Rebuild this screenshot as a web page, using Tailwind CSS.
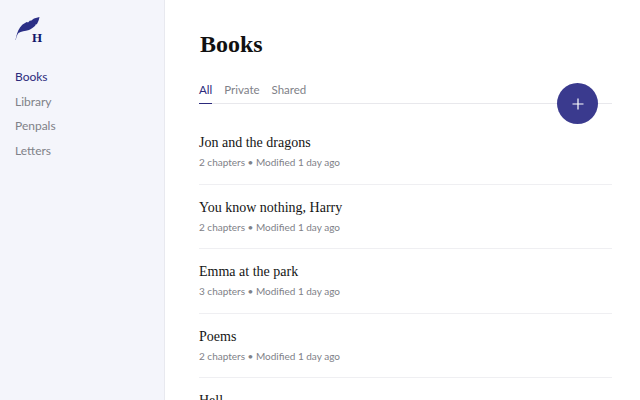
<!DOCTYPE html>
<html lang="en">
<head>
  <meta charset="UTF-8">
  <title>Books</title>
  <script src="https://cdn.jsdelivr.net/npm/@tailwindcss/browser@4"></script>
</head>
<body class="w-[640px] h-[400px] overflow-hidden bg-white flex font-['Lato',sans-serif]">
  <!-- sidebar -->
  <aside class="w-[165px] h-[400px] shrink-0 bg-[#f4f5fb] border-r border-[#e8e9ef] pl-[15px] pt-[17px]">
    <div class="relative w-[30px] h-[28px]">
      <svg width="26" height="24" viewBox="0 0 26 24" class="block">
        <path d="M0.5 23 C1.5 18 2.5 14 5 10.5 C8 6.5 10 6 12 5 L13 5.5 L15 3.5 L16 3.8 L19 1.5 L24.5 0 C24 3 23 5 22 7 L20 8 L20.5 8.5 C18 11 16 12 14 13 C10 14.5 6 14 3.5 16 C2 18 1.3 20 0.8 23 Z" fill="#2b2f86"/>
      </svg>
      <span class="absolute left-[17px] top-[14px] font-['Liberation_Serif',serif] font-bold text-[13px] leading-[14px] text-[#11176b]">H</span>
    </div>
    <nav class="mt-[23px] flex flex-col gap-[6.7px] text-[12px] leading-[18px] text-[#808188]">
      <a class="text-[#2c2a7c]">Books</a>
      <a>Library</a>
      <a>Penpals</a>
      <a>Letters</a>
    </nav>
  </aside>

  <!-- main -->
  <main class="relative flex-1 pl-[35px] pr-[28px] pt-[28px]">
    <h1 class="font-['Liberation_Serif',serif] font-bold text-[24px] leading-[32px] text-[#111]">Books</h1>
    <div class="mt-[21px] -ml-px flex gap-[12px] border-b border-[#e8e8ec] text-[11.5px] leading-[18px] text-[#808188]">
      <a class="text-[#2c2a7c] border-b border-[#2c2a7c] -mb-px pb-[4px]">All</a>
      <a class="pb-[4px]">Private</a>
      <a class="pb-[4px]">Shared</a>
    </div>
    <button class="absolute left-[392px] top-[83px] w-[41px] h-[41px] rounded-full bg-[#3a3a8e] flex items-center justify-center">
      <svg width="12" height="12" viewBox="0 0 12 12"><path d="M6 0.5V11.5M0.5 6H11.5" stroke="#fff" stroke-width="1.2"/></svg>
    </button>

    <ul class="-ml-px">
      <li class="h-[81px] pt-[29px] border-b border-[#efeff2]">
        <p class="font-['Liberation_Serif',serif] text-[14px] leading-[20px] text-[#151515]">Jon and the dragons</p>
        <p class="mt-[2px] text-[10px] leading-[14px] text-[#808188]">2 chapters • Modified 1 day ago</p>
      </li>
      <li class="h-[64px] pt-[13px] border-b border-[#efeff2]">
        <p class="font-['Liberation_Serif',serif] text-[14px] leading-[20px] text-[#151515]">You know nothing, Harry</p>
        <p class="mt-[2px] text-[10px] leading-[14px] text-[#808188]">2 chapters • Modified 1 day ago</p>
      </li>
      <li class="h-[65px] pt-[13px] border-b border-[#efeff2]">
        <p class="font-['Liberation_Serif',serif] text-[14px] leading-[20px] text-[#151515]">Emma at the park</p>
        <p class="mt-[2px] text-[10px] leading-[14px] text-[#808188]">3 chapters • Modified 1 day ago</p>
      </li>
      <li class="h-[64px] pt-[13px] border-b border-[#efeff2]">
        <p class="font-['Liberation_Serif',serif] text-[14px] leading-[20px] text-[#151515]">Poems</p>
        <p class="mt-[2px] text-[10px] leading-[14px] text-[#808188]">2 chapters • Modified 1 day ago</p>
      </li>
      <li class="h-[20px] pt-[13px]">
        <p class="font-['Liberation_Serif',serif] text-[14px] leading-[20px] text-[#151515]">Hell</p>
      </li>
    </ul>
  </main>
</body>
</html>
